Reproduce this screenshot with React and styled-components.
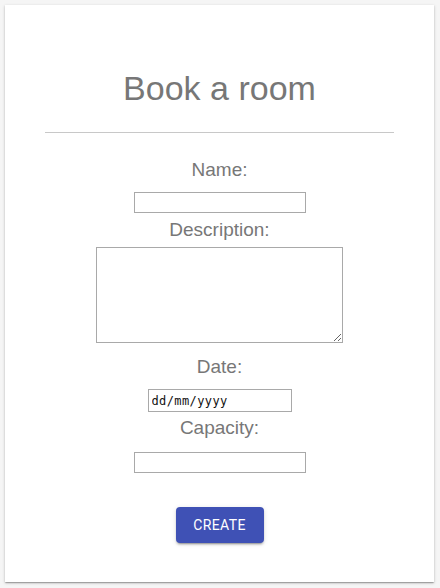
import React from "react";
import styled, { createGlobalStyle } from "styled-components";

const GlobalStyle = createGlobalStyle`
  html, body {
    margin: 0;
    padding: 0;
    background: #f5f5f5;
  }
  body {
    font-family: "Liberation Sans", Arial, sans-serif;
  }
`;

const Page = styled.div`
  padding: 5px 6px 6px 5px;
`;

const Card = styled.div`
  background: #fff;
  box-shadow: 0 1px 3px rgba(0, 0, 0, 0.2), 0 1px 1px rgba(0, 0, 0, 0.14),
    0 2px 1px -1px rgba(0, 0, 0, 0.12);
  padding: 0 0 39px;
  display: flex;
  flex-direction: column;
  align-items: center;
`;

const Title = styled.h1`
  margin: 63px 0 0;
  font-family: "Liberation Sans", Arial, sans-serif;
  font-weight: 400;
  font-size: 34px;
  line-height: 40px;
  color: #777;
`;

const Divider = styled.hr`
  align-self: stretch;
  margin: 24px 40px 0;
  border: none;
  height: 1px;
  background: #c8c8c8;
`;

const Form = styled.form`
  display: flex;
  flex-direction: column;
  align-items: center;
  align-self: stretch;
`;

const Label = styled.label`
  margin-top: ${(p) => p.$mt}px;
  font-family: "Liberation Sans", Arial, sans-serif;
  font-size: 19px;
  line-height: 22px;
  color: #777;
`;

const TextInput = styled.input`
  box-sizing: border-box;
  margin: ${(p) => p.$mt}px 0 0;
  width: ${(p) => p.$w}px;
  height: ${(p) => p.$h}px;
  border: 1px solid #a9a9a9;
  border-radius: 0;
  padding: 1px 3px;
  background: #fff;
  font-family: ${(p) =>
    p.$mono ? '"DejaVu Sans Mono", "Liberation Mono", monospace' : '"Liberation Sans", Arial, sans-serif'};
  font-size: ${(p) => (p.$mono ? "12px" : "13px")};
  letter-spacing: ${(p) => (p.$mono ? "0.4px" : "0")};
  color: #000;
  outline: none;
  &::placeholder {
    color: #111;
    opacity: 1;
  }
`;

const TextArea = styled.textarea`
  box-sizing: border-box;
  margin: 6px 0 0;
  width: 247px;
  height: 96px;
  border: 1px solid #a9a9a9;
  border-radius: 0;
  padding: 2px;
  font-family: "Liberation Sans", Arial, sans-serif;
  font-size: 13px;
  outline: none;
`;

const Button = styled.button`
  margin-top: 34px;
  box-sizing: border-box;
  width: 88px;
  height: 36px;
  padding: 6px 16px;
  border: none;
  border-radius: 4px;
  background: #3f51b5;
  color: #fff;
  font-family: Roboto, "Liberation Sans", Arial, sans-serif;
  font-size: 14px;
  font-weight: 400;
  letter-spacing: 0.4px;
  text-transform: uppercase;
  cursor: pointer;
  box-shadow: 0px 3px 1px -2px rgba(0, 0, 0, 0.2), 0px 2px 2px 0px rgba(0, 0, 0, 0.14),
    0px 1px 5px 0px rgba(0, 0, 0, 0.12);
`;

export default function App() {
  return (
    <>
      <GlobalStyle />
      <Page>
        <Card>
          <Title>Book a room</Title>
          <Divider />
          <Form onSubmit={(e) => e.preventDefault()}>
            <Label htmlFor="name" $mt={26}>Name:</Label>
            <TextInput id="name" type="text" $mt={11} $w={172} $h={21} />
            <Label htmlFor="description" $mt={6}>Description:</Label>
            <TextArea id="description" />
            <Label htmlFor="date" $mt={13}>Date:</Label>
            <TextInput id="date" type="text" placeholder="dd/mm/yyyy" $mono $mt={11} $w={144} $h={23} />
            <Label htmlFor="capacity" $mt={5}>Capacity:</Label>
            <TextInput id="capacity" type="text" $mt={13} $w={172} $h={21} />
            <Button type="submit">Create</Button>
          </Form>
        </Card>
      </Page>
    </>
  );
}
